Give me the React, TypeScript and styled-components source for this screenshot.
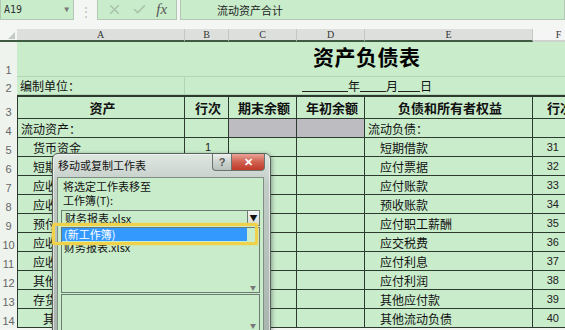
import React from "react";
import styled, { createGlobalStyle } from "styled-components";
import { X, Check } from "lucide-react";

const colour = {
  page: "#f3f6f3",
  cell: "#c9eccb",
  grid: "#b2d6b4",
  line: "#2d3a2f",
  head: "#dcdfdc",
  headLine: "#3f5c43",
  rowHead: "#eef3ee",
  grey: "#bdbcc0",
  boxBorder: "#b3c7b4",
  blue: "#3399ff",
  yellow: "#f0d24a",
};

const CJK = `"Noto Sans CJK SC", "Liberation Sans", sans-serif`;
const COLS = "17px 168px 44px 68px 68px 168px 52px";

const GlobalStyle = createGlobalStyle`
  * { box-sizing: border-box; }
  html, body { margin: 0; padding: 0; }
  body {
    width: 565px;
    height: 330px;
    overflow: hidden;
    background: ${colour.page};
    font-family: ${CJK};
    color: #111;
  }
`;

const Page = styled.div`
  position: relative;
  width: 565px;
  height: 330px;
  overflow: hidden;
  display: flex;
  flex-direction: column;
`;

/* ---------- formula bar ---------- */

const FormulaBar = styled.div`
  height: 20px;
  display: flex;
  align-items: stretch;
  margin-bottom: 9px;
`;

const Box = styled.div<{ $width?: number }>`
  ${(p) => (p.$width ? `width: ${p.$width}px;` : "flex: 1;")}
  background: ${colour.cell};
  border: 1px solid ${colour.boxBorder};
  border-top: none;
  display: flex;
  align-items: center;
`;

const NameBox = styled(Box)`
  justify-content: space-between;
  padding: 0 4px 0 3px;
  font-family: "DejaVu Sans Mono", monospace;
  font-size: 10px;
  color: #333;
`;

const Caret = styled.span`
  font-size: 8px;
  color: #777;
`;

const Grip = styled.div`
  width: 23px;
  display: flex;
  align-items: center;
  justify-content: center;
  color: #b9c2b9;
  font-size: 12px;
`;

const ActionBox = styled(Box)`
  justify-content: space-around;
  padding: 0 4px;
  margin-right: 3px;
`;

const Fx = styled.span`
  font-family: "Liberation Serif", serif;
  font-style: italic;
  font-size: 15px;
  color: #555;
`;

const FormulaText = styled(Box)`
  padding-left: 36px;
  font-size: 11px;
  color: #222;
`;

/* ---------- sheet ---------- */

const Sheet = styled.div`
  display: flex;
  flex-direction: column;
`;

const Row = styled.div<{ $height: number }>`
  display: grid;
  grid-template-columns: ${COLS};
  height: ${(p) => p.$height}px;
`;

const Corner = styled.div`
  background: ${colour.page};
  border-bottom: 2px solid ${colour.headLine};
  display: flex;
  align-items: flex-end;
  justify-content: flex-end;
  padding: 0 2px 1px 0;
`;

const ColHead = styled.div<{ $light?: boolean }>`
  background: ${(p) => (p.$light ? "#f4f5f4" : colour.head)};
  border-right: 1px solid #c4c8c4;
  border-bottom: 2px solid ${(p) => (p.$light ? "#cfd3cf" : colour.headLine)};
  font-family: "Liberation Serif", serif;
  font-size: 10px;
  color: #333;
  display: flex;
  align-items: center;
  justify-content: center;
`;

const RowHead = styled.div`
  background: ${colour.rowHead};
  font-family: "Liberation Sans", sans-serif;
  font-size: 11px;
  color: #666;
  display: flex;
  align-items: flex-end;
  justify-content: center;
  padding-bottom: 1px;
`;

const PlainCell = styled.div<{ $span?: number }>`
  grid-column: span ${(p) => p.$span ?? 1};
  background: ${colour.cell};
  border-right: 1px solid ${colour.grid};
  border-bottom: 1px solid ${colour.grid};
  font-size: 12px;
  padding-left: 3px;
  display: flex;
  align-items: center;
  white-space: nowrap;
`;

const Title = styled(PlainCell)`
  align-items: flex-end;
  padding: 0 0 5px 296px;
  font-size: 21px;
  font-weight: 700;
  letter-spacing: 0.5px;
  color: #000;
  border-right: none;
  overflow: hidden;
`;

const DateLine = styled(PlainCell)`
  padding-left: 117px;
  border-right: none;
  line-height: 14px;
`;

const Blank = styled.span<{ $width: number }>`
  display: inline-block;
  width: ${(p) => p.$width}px;
  border-bottom: 1px solid #222;
  height: 13px;
`;

const Cell = styled.div<{
  $align?: "left" | "center" | "right";
  $indent?: number;
  $pr?: number;
  $bold?: boolean;
  $fill?: string;
  $first?: boolean;
  $top?: boolean;
}>`
  background: ${(p) => p.$fill ?? colour.cell};
  border-right: 1px solid ${colour.line};
  border-bottom: 1px solid ${colour.line};
  ${(p) => (p.$first ? `border-left: 1px solid ${colour.line};` : "")}
  ${(p) => (p.$top ? `border-top: 2px solid ${colour.line};` : "")}
  display: flex;
  align-items: center;
  justify-content: ${(p) =>
    p.$align === "center" ? "center" : p.$align === "right" ? "flex-end" : "flex-start"};
  padding-left: ${(p) => 3 + (p.$indent ?? 0)}px;
  padding-right: ${(p) => p.$pr ?? 0}px;
  font-size: ${(p) => (p.$bold ? 13 : 12)}px;
  font-weight: ${(p) => (p.$bold ? 700 : 400)};
  white-space: nowrap;
  overflow: hidden;
`;

const Num = styled(Cell)`
  font-family: "Liberation Sans", sans-serif;
  font-size: 11px;
  color: #222;
`;

/* ---------- dialog ---------- */

const Dialog = styled.div`
  position: absolute;
  left: 52px;
  top: 153px;
  width: 219px;
  height: 190px;
  border: 1px solid #56625b;
  border-radius: 6px 6px 0 0;
  background: linear-gradient(#dfe7e1, #c3ccc7 30px, #a9b3ae);
  box-shadow: inset 0 0 0 1px rgba(255, 255, 255, 0.55), 1px 1px 4px rgba(0, 0, 0, 0.35);
  display: flex;
  flex-direction: column;
  padding: 0 6px 0 4px;
`;

const TitleBar = styled.div`
  height: 23px;
  display: flex;
  align-items: flex-start;
  justify-content: space-between;
  font-size: 11px;
  line-height: 14px;
  color: #111;
`;

const TitleText = styled.span`
  padding: 4px 0 0 1px;
`;

const Buttons = styled.div`
  display: flex;
  margin-right: -1px;
`;

const FrameButton = styled.div<{ $close?: boolean }>`
  width: ${(p) => (p.$close ? 33 : 20)}px;
  height: 17px;
  border: 1px solid #6b7570;
  border-top: none;
  ${(p) => (p.$close ? "border-left: none; border-radius: 0 0 4px 0;" : "border-radius: 0 0 0 4px;")}
  background: ${(p) =>
    p.$close
      ? "linear-gradient(#e8a497, #d0604f 50%, #c03a28)"
      : "linear-gradient(#eef1ef, #cdd4d0 50%, #b8c1bc)"};
  color: ${(p) => (p.$close ? "#fff" : "#555")};
  font-family: "Liberation Sans", sans-serif;
  font-size: 11px;
  font-weight: 700;
  display: flex;
  align-items: center;
  justify-content: center;
`;

const Panel = styled.div`
  flex: 1;
  background: ${colour.cell};
  border: 1px solid #7f8d85;
  padding: 1px 3px 0 3px;
  display: flex;
  flex-direction: column;
  font-size: 11px;
`;

const Label = styled.div`
  height: 14px;
  line-height: 14px;
  padding-left: 2px;
`;

const Combo = styled.div`
  margin-top: 3px;
  height: 16px;
  line-height: 14px;
  border: 1px solid #6d7c72;
  display: flex;
  align-items: center;
  justify-content: space-between;
  padding-left: 3px;
`;

const ComboArrow = styled.div`
  width: 12px;
  height: 14px;
  border-left: 1px solid #6d7c72;
  background: linear-gradient(#f2f5f3, #d6dcd8);
  display: flex;
  align-items: center;
  justify-content: center;
  font-size: 8px;
  color: #111;
`;

const ListBox = styled.div<{ $height: number }>`
  position: relative;
  height: ${(p) => p.$height}px;
  border: 1px solid #6d7c72;
  margin-top: 1px;
  padding-right: 12px;
  display: flex;
  flex-direction: column;
`;

const ListItem = styled.div<{ $selected?: boolean }>`
  height: 13px;
  line-height: 13px;
  padding-left: 2px;
  font-size: 11px;
  background: ${(p) => (p.$selected ? colour.blue : "transparent")};
  color: ${(p) => (p.$selected ? "#fff" : "#111")};
`;

const ScrollArrow = styled.span<{ $bottom?: number }>`
  position: absolute;
  right: 3px;
  bottom: ${(p) => p.$bottom ?? 1}px;
  font-size: 6px;
  line-height: 6px;
  color: #777;
`;

const Highlight = styled.div`
  position: absolute;
  left: 52px;
  top: 223px;
  width: 206px;
  height: 22px;
  border: 3px solid ${colour.yellow};
  border-radius: 2px;
  box-shadow: 0 0 2px rgba(240, 210, 74, 0.7);
`;

/* ---------- data ---------- */

type Line = { left: string; lIndent: number; b?: string; right: string; rIndent: number; f?: string; grey?: boolean };

const lines: Line[] = [
  { left: "流动资产：", lIndent: 0, right: "流动负债：", rIndent: 0, grey: true },
  { left: "货币资金", lIndent: 12, b: "1", right: "短期借款", rIndent: 12, f: "31" },
  { left: "短期投资", lIndent: 12, b: "2", right: "应付票据", rIndent: 12, f: "32" },
  { left: "应收票据", lIndent: 12, b: "3", right: "应付账款", rIndent: 12, f: "33" },
  { left: "应收账款", lIndent: 12, b: "4", right: "预收账款", rIndent: 12, f: "34" },
  { left: "预付账款", lIndent: 12, b: "5", right: "应付职工薪酬", rIndent: 12, f: "35" },
  { left: "应收股利", lIndent: 12, b: "6", right: "应交税费", rIndent: 12, f: "36" },
  { left: "应收利息", lIndent: 12, b: "7", right: "应付利息", rIndent: 12, f: "37" },
  { left: "其他应收款", lIndent: 12, b: "8", right: "应付利润", rIndent: 12, f: "38" },
  { left: "存货", lIndent: 12, b: "9", right: "其他应付款", rIndent: 12, f: "39" },
  { left: "其中：原材料", lIndent: 22, b: "10", right: "其他流动负债", rIndent: 12, f: "40" },
];

const columns = ["A", "B", "C", "D", "E", "F"];

export default function App() {
  return (
    <Page>
      <GlobalStyle />
      <FormulaBar>
        <NameBox $width={74}>
          A19
          <Caret>▼</Caret>
        </NameBox>
        <Grip>⋮</Grip>
        <ActionBox $width={80}>
          <X size={15} color="#a9c2aa" strokeWidth={2.5} />
          <Check size={15} color="#a9c2aa" strokeWidth={2.5} />
          <Fx>fx</Fx>
        </ActionBox>
        <FormulaText>流动资产合计</FormulaText>
      </FormulaBar>

      <Sheet>
        <Row $height={13}>
          <Corner>
            <svg width="7" height="7" viewBox="0 0 7 7">
              <polygon points="7,0 7,7 0,7" fill="#c5c9c5" />
            </svg>
          </Corner>
          {columns.map((c) => (
            <ColHead key={c} $light={c === "F"}>
              {c}
            </ColHead>
          ))}
        </Row>

        <Row $height={35}>
          <RowHead>1</RowHead>
          <Title $span={6}>资产负债表</Title>
        </Row>

        <Row $height={18}>
          <RowHead>2</RowHead>
          <PlainCell>编制单位：</PlainCell>
          <DateLine $span={5}>
            <Blank $width={46} />年<Blank $width={26} />月<Blank $width={22} />日
          </DateLine>
        </Row>

        <Row $height={24}>
          <RowHead>3</RowHead>
          <Cell $top $first $bold $align="center">资产</Cell>
          <Cell $top $bold $align="center">行次</Cell>
          <Cell $top $bold $align="center">期末余额</Cell>
          <Cell $top $bold $align="center">年初余额</Cell>
          <Cell $top $bold $align="center">负债和所有者权益</Cell>
          <Cell $top $bold $align="center">行次</Cell>
        </Row>

        {lines.map((l, i) => (
          <Row $height={19} key={i}>
            <RowHead>{i + 4}</RowHead>
            <Cell $first $indent={l.lIndent}>{l.left}</Cell>
            <Num $align="center">{l.b}</Num>
            <Cell $fill={l.grey ? colour.grey : undefined} />
            <Cell $fill={l.grey ? colour.grey : undefined} />
            <Cell $indent={l.rIndent}>{l.right}</Cell>
            <Num $align="right" $pr={25}>{l.f}</Num>
          </Row>
        ))}
      </Sheet>

      <Dialog>
        <TitleBar>
          <TitleText>移动或复制工作表</TitleText>
          <Buttons>
            <FrameButton>?</FrameButton>
            <FrameButton $close>✕</FrameButton>
          </Buttons>
        </TitleBar>
        <Panel>
          <Label>将选定工作表移至</Label>
          <Label>工作簿(T):</Label>
          <Combo>
            财务报表.xlsx
            <ComboArrow>▼</ComboArrow>
          </Combo>
          <ListBox $height={66}>
            <ListItem $selected>(新工作簿)</ListItem>
            <ListItem>财务报表.xlsx</ListItem>
            <ScrollArrow>▼</ScrollArrow>
          </ListBox>
          <ListBox $height={40}>
            <ScrollArrow $bottom={4}>▼</ScrollArrow>
          </ListBox>
        </Panel>
      </Dialog>
      <Highlight />
    </Page>
  );
}
